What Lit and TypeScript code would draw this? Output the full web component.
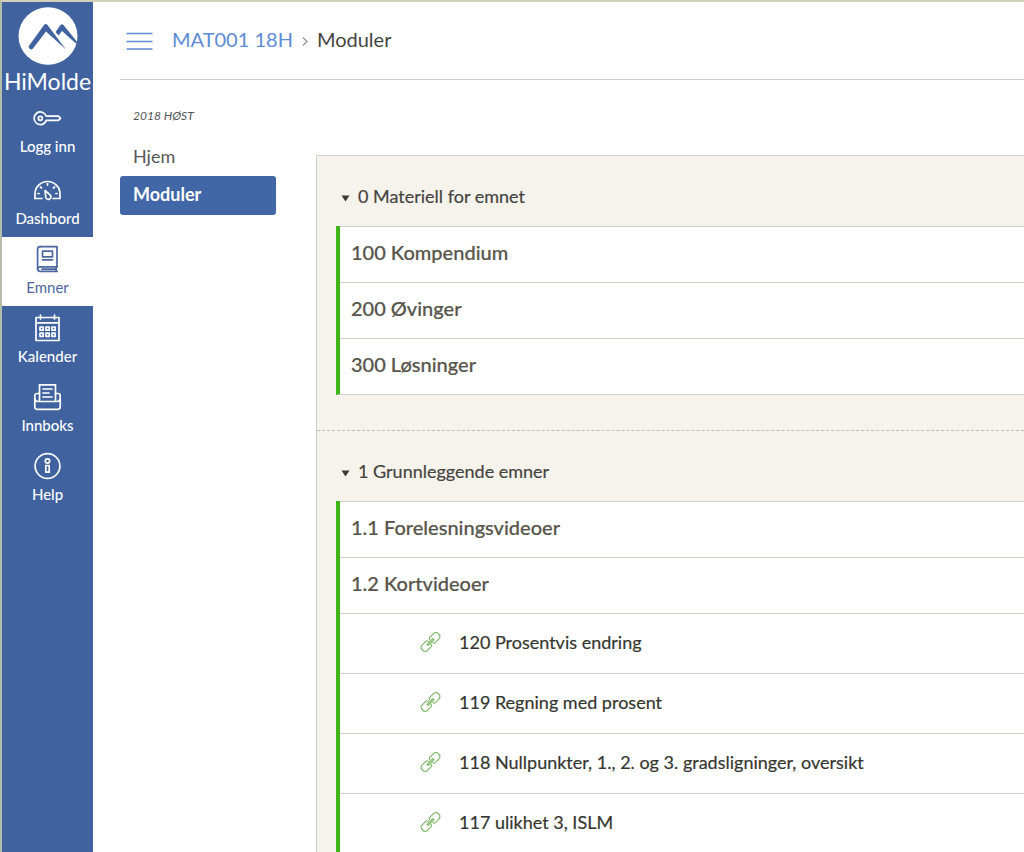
import { LitElement, html, css, svg } from "lit";
import { customElement, property } from "lit/decorators.js";

type IconName = "key" | "gauge" | "book" | "calendar" | "inbox" | "info";

const icons = {
  key: svg`<path d="M13.300 12.200H25.500l2 2.100-2 2.100H13.300a6.300 6.300 0 1 1 0-4.200z"/><circle cx="7.300" cy="14.300" r="2"/>`,
  gauge: svg`<path d="M2 22.5V18a12.5 12.5 0 0 1 25 0v4.5h-7"/><path d="M2 22.5h7"/><path d="M12 14.5l5 4.3a2.6 2.6 0 1 1-4.2 2.6z"/><path d="M14.5 7.5v1.6M7.4 11l1.2 1M21.6 11l-1.2 1M5 17.5h1M23 17.5h1"/>`,
  book: svg`<path d="M7.2 1.6H24v20.2H7.2"/><path d="M24 21.8c-1.6 1.4-1.6 3.2 0 4.6H7.4A2.8 2.8 0 0 1 4.6 23.600V4.200A2.600 2.600 0 0 1 7.200 1.600"/><path d="M4.600 24a2.600 2.600 0 0 1 2.800-2.200"/><path d="M9.500 6.200h10v5.600h-10zM9.500 14.800h10M9 24.200h14"/>`,
  calendar: svg`<path d="M3 3.500h23v23H3zM3 8.800h23M7.500 1v4M21.500 1v4"/><path d="M7 13h3.200v3.200H7zM13 13h3.200v3.200H13zM19 13h3.200v3.200H19zM7 19.200h3.200v3.200H7zM13 19.200h3.200v3.200H13zM19 19.200h3.200v3.200H19z"/>`,
  inbox: svg`<path d="M6.500 18V1.800h16V18"/><path d="M6.500 10.500H4A2.200 2.200 0 0 0 1.800 12.700v11.400A2.200 2.200 0 0 0 4 26.300h21a2.200 2.200 0 0 0 2.200-2.200V12.700A2.200 2.200 0 0 0 25 10.500h-2.500"/><path d="M1.800 15.500c0 1.500 1 3 3.200 3h19c2.200 0 3.200-1.500 3.200-3M10 6h9M10 10h6M10 14h9"/>`,
  info: svg`<circle cx="14.500" cy="14" r="12.400"/><circle cx="14.500" cy="9" r="2.200"/><path d="M12.800 13.500h3.400v6.700h-3.400z"/>`,
};

@customElement("nav-item")
class NavItem extends LitElement {
  @property() icon: IconName = "info";
  @property() label = "";
  @property({ type: Boolean }) active = false;

  static styles = css`
    :host { display: block; }
    .item {
      display: flex;
      flex-direction: column;
      align-items: center;
      gap: 3px;
      box-sizing: border-box;
      min-height: 69px;
      padding-top: 8px;
      color: #fff;
      font-size: 15px;
      font-weight: 500;
      line-height: 20px;
      text-decoration: none;
    }
    .active { background: #fff; color: #4c66a0; font-weight: 400; }
    .glyph {
      width: 29px;
      height: 29px;
      fill: none;
      stroke: currentColor;
      stroke-width: 1.7;
      stroke-linejoin: round;
      stroke-linecap: round;
    }
  `;

  render() {
    return html`<a class="item ${this.active ? "active" : ""}" href="#">
      <svg class="glyph" viewBox="0 0 29 29" aria-hidden="true">${icons[this.icon]}</svg>
      <span>${this.label}</span>
    </a>`;
  }
}

interface Entry { title: string; link?: boolean; }

@customElement("module-section")
class ModuleSection extends LitElement {
  @property() heading = "";
  @property({ attribute: false }) entries: Entry[] = [];

  static styles = css`
    :host { display: block; padding: 20px 0 35px 19px; }
    .toggle {
      display: flex;
      align-items: center;
      gap: 8px;
      width: 100%;
      height: 50px;
      padding: 0 0 10px 5px;
      box-sizing: border-box;
      border: 0;
      background: none;
      color: #45443f;
      font: 400 18px/24px Lato, sans-serif;
      text-align: left;
      -webkit-text-stroke: 0.2px currentColor;
    }
    .caret { width: 9px; height: 11px; fill: #3c3b37; }
    .list {
      margin: 0;
      padding: 0;
      list-style: none;
      border-left: 4px solid #3fb618;
      border-bottom: 1px solid #d0cfca;
      background: #fff;
    }
    .row {
      display: flex;
      align-items: center;
      box-sizing: border-box;
      height: 56px;
      padding: 0 12px 5px 11px;
      border-top: 1px solid #d0cfca;
      color: #58564c;
      font-size: 20px;
      line-height: 24px;
      font-weight: 500;
      -webkit-text-stroke: 0.2px currentColor;
    }
    .row.link {
      height: 60px;
      padding: 0 12px 4px 80px;
      font-size: 18px;
      font-weight: 400;
      gap: 18px;
    }
    .anchor { color: #35372f; text-decoration: none; }
    .chain { width: 21px; height: 21px; flex: none; fill: none; stroke: #80b86a; stroke-width: 1.2; }
  `;

  render() {
    return html`
      <button class="toggle" type="button" aria-expanded="true">
        <svg class="caret" viewBox="0 -4 9 11" aria-hidden="true"><path d="M.5 .5h8l-4 6z"/></svg>
        <span>${this.heading}</span>
      </button>
      <ul class="list">
        ${this.entries.map((e) => e.link
          ? html`<li class="row link">
              <svg class="chain" viewBox="0 0 21 21" aria-hidden="true">
                <g transform="rotate(-45 10.500 11)">
                  <path d="M9.300 9.300V9A1.800 1.800 0 0 0 7.500 7.200H1.200L-.7 9v4l1.900 1.800H7.500A1.800 1.800 0 0 0 9.300 13v-.3"/>
                  <path d="M11.700 9.300V9a1.800 1.800 0 0 1 1.800-1.800h6.300L21.700 9v4l-1.900 1.800h-6.300A1.800 1.800 0 0 1 11.700 13v-.3"/>
                  <path d="M6.500 10.200h8v1.600h-8z"/>
                </g>
              </svg>
              <a class="anchor" href="#">${e.title}</a>
            </li>`
          : html`<li class="row">${e.title}</li>`)}
      </ul>`;
  }
}

@customElement("app-root")
class AppRoot extends LitElement {
  static styles = css`
    :host {
      display: block;
      font-family: Lato, sans-serif;
      color: #45443f;
    }
    .shell {
      display: grid;
      grid-template-columns: 91px minmax(0, 1fr);
      box-sizing: border-box;
      height: 100vh;
      overflow: hidden;
      border-left: 2px solid #b4bda8;
      border-top: 2px solid #d3cfba;
      background: #fff;
    }
    .sidebar { background: #4063a0; }
    .brand {
      display: flex;
      flex-direction: column;
      align-items: center;
      gap: 2px;
      padding-top: 5px;
      height: 89px;
      color: #fff;
      font-size: 23px;
      line-height: 28px;
      text-decoration: none;
    }
    .emblem { width: 60px; height: 58px; flex: none; }
    .login { margin-bottom: 3px; }
    .main { padding-left: 27px; }
    .topbar {
      display: flex;
      align-items: center;
      box-sizing: border-box;
      height: 78px;
      padding: 0 6px;
      border-bottom: 1px solid #c9ccd0;
    }
    .menu {
      display: block;
      width: 27px;
      height: 18px;
      padding: 0;
      border: 0;
      background: none;
      color: #5d8bd4;
    }
    .bars { display: block; width: 27px; height: 18px; stroke: currentColor; stroke-width: 1.6; }
    .crumbs {
      display: flex;
      align-items: center;
      gap: 9px;
      padding: 0 0 4px 19px;
      font-size: 20px;
      line-height: 24px;
    }
    .course { color: #5d8bd4; text-decoration: none; }
    .sep { width: 6px; height: 15px; fill: none; stroke: #97958c; stroke-width: 1.2; }
    .columns { display: grid; grid-template-columns: 156px minmax(0, 1fr); gap: 40px; }
    .term {
      margin: 0;
      padding: 27px 13px 16px;
      font-size: 12px;
      line-height: 18px;
      font-style: italic;
      color: #55565a;
    }
    .tab {
      display: block;
      padding: 0 13px;
      color: #55565a;
      font-size: 18px;
      line-height: 30px;
      text-decoration: none;
    }
    .tab.current {
      margin-top: 5px;
      padding-bottom: 2px;
      border-radius: 3px;
      background: #4167a6;
      color: #fff;
      font-weight: 700;
      line-height: 37px;
    }
    .panel {
      margin-top: 75px;
      border: solid #d0cfca;
      border-width: 1px 0 0 1px;
      background: #f6f3ed;
    }
    .divided { border-top: 1px dashed #bdbbb4; }
  `;

  render() {
    return html`
      <div class="shell">
        <nav class="sidebar" aria-label="Global">
          <a class="brand" href="#">
            <svg class="emblem" viewBox="0 0 60 58" aria-hidden="true">
              <ellipse cx="30" cy="29" rx="29.500" ry="28.800" fill="#fff"/>
              <path d="M10.500 39.500 26 18Q28 16 29.500 18L48 42.500 28 24.500 15 41.500Q12 44 10.500 39.500Z" fill="#4063a0"/>
              <path d="M37.500 25 42.500 18Q44 16.500 45.500 18L58.800 34.500 58.500 37 44 24 40.500 28.500Z" fill="#4063a0"/>
            </svg>
            <span>HiMolde</span>
          </a>
          <nav-item class="login" icon="key" label="Logg inn"></nav-item>
          <nav-item icon="gauge" label="Dashbord"></nav-item>
          <nav-item icon="book" label="Emner" active></nav-item>
          <nav-item icon="calendar" label="Kalender"></nav-item>
          <nav-item icon="inbox" label="Innboks"></nav-item>
          <nav-item icon="info" label="Help"></nav-item>
        </nav>
        <div class="main">
          <header class="topbar">
            <button class="menu" type="button" aria-label="Meny">
              <svg class="bars" viewBox="0 0 27 18" aria-hidden="true"><path d="M.5 1.500h26M.5 9.500h26M.5 17h26"/></svg>
            </button>
            <nav class="crumbs" aria-label="Brødsmuler">
              <a class="course" href="#">MAT001 18H</a>
              <svg class="sep" viewBox="0 -6 6 15" aria-hidden="true"><path d="M1 .5l4 4-4 4"/></svg>
              <span>Moduler</span>
            </nav>
          </header>
          <div class="columns">
            <nav aria-label="Emne">
              <p class="term">2018 HØST</p>
              <a class="tab" href="#">Hjem</a>
              <a class="tab current" href="#" aria-current="page">Moduler</a>
            </nav>
            <main class="panel">
              <module-section heading="0 Materiell for emnet" .entries=${[
                { title: "100 Kompendium" },
                { title: "200 Øvinger" },
                { title: "300 Løsninger" },
              ]}></module-section>
              <module-section class="divided" heading="1 Grunnleggende emner" .entries=${[
                { title: "1.1 Forelesningsvideoer" },
                { title: "1.2 Kortvideoer" },
                { title: "120 Prosentvis endring", link: true },
                { title: "119 Regning med prosent", link: true },
                { title: "118 Nullpunkter, 1., 2. og 3. gradsligninger, oversikt", link: true },
                { title: "117 ulikhet 3, ISLM", link: true },
              ]}></module-section>
            </main>
          </div>
        </div>
      </div>`;
  }
}
